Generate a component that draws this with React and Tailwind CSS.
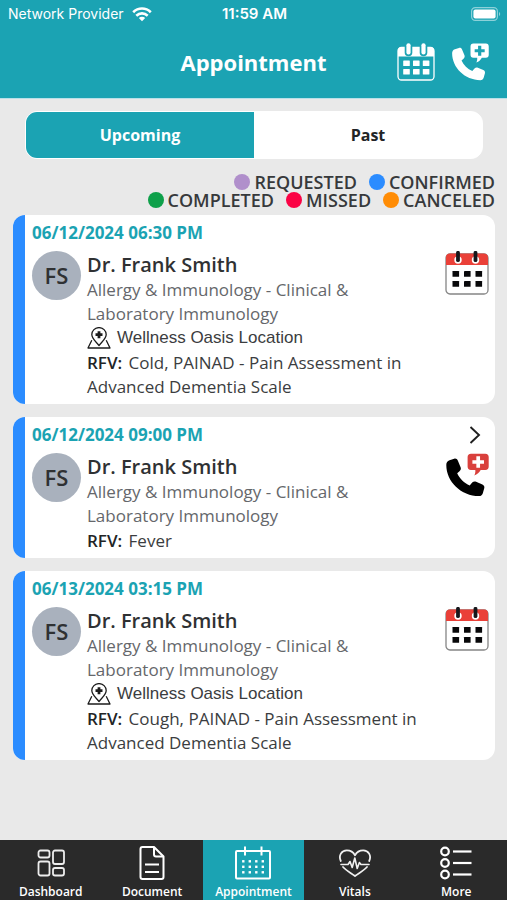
import React, { useState } from "react";

const LEGEND = [
  [
    { label: "REQUESTED", dot: "bg-[#b08fcb]" },
    { label: "CONFIRMED", dot: "bg-[#2b8cff]" },
  ],
  [
    { label: "COMPLETED", dot: "bg-[#0ea04a]" },
    { label: "MISSED", dot: "bg-[#fb0345]" },
    { label: "CANCELED", dot: "bg-[#ff8c05]" },
  ],
];

const APPOINTMENTS = [
  {
    id: 1,
    date: "06/12/2024 06:30 PM",
    location: "Wellness Oasis Location",
    reason: "Cold, PAINAD - Pain Assessment in Advanced Dementia Scale",
  },
  {
    id: 2,
    date: "06/12/2024 09:00 PM",
    reason: "Fever",
  },
  {
    id: 3,
    date: "06/13/2024 03:15 PM",
    location: "Wellness Oasis Location",
    reason: "Cough, PAINAD - Pain Assessment in Advanced Dementia Scale",
  },
];

const WifiIcon = () => (
  <svg width="20" height="15" viewBox="0 0 20 15" fill="none" stroke="white" strokeWidth="2.6">
    <path d="M1.2 5.2c5-4.9 12.6-4.9 17.6 0M4.3 8.7c3.3-3.1 8.1-3.1 11.4 0" />
    <path d="M10 14.2 6.8 11c1.8-1.6 4.6-1.6 6.4 0z" fill="white" stroke="none" />
  </svg>
);

const BatteryIcon = () => (
  <svg width="30" height="14" viewBox="0 0 30 14" fill="none">
    <rect x="0.6" y="0.6" width="25.8" height="12.8" rx="3.6" stroke="#8dd1d9" strokeWidth="1.2" />
    <rect x="2.4" y="2.4" width="22.2" height="9.2" rx="2" fill="white" />
    <path d="M28 5v4c1.6-.7 1.6-3.3 0-4z" fill="#8dd1d9" />
  </svg>
);

const HeaderCalendarIcon = () => (
  <svg width="38" height="38" viewBox="0 0 38 38" fill="none">
    <path d="M1 13.5V7.5Q1 4 4.5 4h29Q37 4 37 7.5v6z" fill="white" />
    <rect x="1" y="4.5" width="36" height="32.5" rx="3.5" stroke="white" strokeWidth="1.3" />
    {[11.5, 26.5].map((x) => (
      <g key={x}>
        <path d={`M${x} 3v6.5`} stroke="#1ba3b3" strokeWidth="7.6" strokeLinecap="round" />
        <path d={`M${x} 2.3v7.2`} stroke="white" strokeWidth="4.2" strokeLinecap="round" />
      </g>
    ))}
    {[6.2, 16, 25.8].map((x) =>
      [17.5, 26].map((y) => (
        <rect key={`${x}-${y}`} x={x} y={y} width="6.6" height="5.6" rx="0.6" fill="white" />
      )),
    )}
  </svg>
);

const CardCalendarIcon = () => (
  <svg width="44" height="44" viewBox="0 0 44 44" fill="none">
    <rect x="1" y="3" width="42" height="40" rx="4" fill="white" stroke="#858585" strokeWidth="1.3" />
    <path d="M1 14V6.5Q1 2.5 5 2.5h34Q43 2.5 43 6.5V14z" fill="#ea4038" />
    {[13, 30.5].map((x) => (
      <g key={x}>
        <circle cx={x} cy="9" r="3.7" fill="white" />
        <path d={`M${x} 1.8v7.4`} stroke="#16171b" strokeWidth="3.8" strokeLinecap="round" />
      </g>
    ))}
    {[7.5, 19, 30.5].map((x) =>
      [20, 30].map((y) => (
        <rect key={`${x}-${y}`} x={x} y={y} width="6.6" height="5.8" rx="0.4" fill="#08080a" />
      )),
    )}
  </svg>
);

// Handset with a medical cross in a speech bubble
const CallIcon = ({ size, phone, bubble, cross }) => (
  <svg width={size} height={size} viewBox="0 0 44 44" fill="none">
    <path
      d="M4.5 7.3 9.2 5.7C10.8 5.2 12.2 6 12.9 7.7L15.6 14.3C16.2 15.8 15.7 17.2 14.5 18.2L12.2 20.2C14.5 25.6 19.2 30 24.7 32.4L27.2 29.6C28.2 28.5 29.7 28.1 31.1 28.7L37.4 31.4C38.9 32.1 39.7 33.5 39.3 35L37.9 40C37.5 41.9 36 43.1 34 43.1 16.2 43.1 1.3 28.8 1.3 12 1.3 9.7 2.4 8 4.5 7.3Z"
      fill={phone}
    />
    <path
      d="M26 .7h14.3c2.3 0 3.4 1.3 3.4 3.4v9.5c0 2.1-1.1 3.4-3.4 3.4h-4.6c-1.4 2.7-3.5 4.4-6.4 5.5.8-1.7 1.3-3.5 1-5.5H26c-2.3 0-3.4-1.3-3.4-3.4V4.1c0-2.1 1.1-3.4 3.4-3.4z"
      fill={bubble}
    />
    <path d="M33.200 3.200v11.600M27.400 9H39" stroke={cross} strokeWidth="3.7" />
  </svg>
);

const ChevronIcon = () => (
  <svg width="12" height="18" viewBox="0 0 12 18" fill="none" stroke="#202020" strokeWidth="1.9">
    <path d="M1.5 1 10 9l-8.5 8" />
  </svg>
);

const LocationIcon = () => (
  <svg width="24" height="22" viewBox="0 0 24 22" fill="none" stroke="#1c1c1c" strokeWidth="1.3" strokeLinejoin="round">
    <path d="M4.8 13.2 1 21h22l-3.800-7.800" />
    <path d="M12 18.5C9 14.7 4.8 11.8 4.8 7.6a7.2 7 0 0 1 14.4 0c0 4.2-4.2 7.1-7.2 10.9z" fill="white" />
    <path d="M12 4.2v7M8.5 7.7h7" strokeWidth="2.8" />
  </svg>
);

const DashboardIcon = () => (
  <svg width="36" height="36" viewBox="0 0 36 36" fill="none" stroke="#ededed" strokeWidth="1.8">
    <rect x="5.5" y="5.5" width="11" height="7" rx="2" />
    <rect x="20" y="5.5" width="11" height="13.5" rx="2" />
    <rect x="5.5" y="16.5" width="11" height="14" rx="2" />
    <rect x="20" y="23" width="11" height="7.5" rx="2" />
  </svg>
);

const DocumentIcon = () => (
  <svg width="36" height="36" viewBox="0 0 36 36" fill="none" stroke="white" strokeWidth="2" strokeLinejoin="round">
    <path d="M8.5 2H20l9.5 9.5v20.5q0 2-2 2h-19q-2 0-2-2V4q0-2 2-2z" />
    <path d="M20 2v7.5q0 2 2 2h7.5M11 19.5h14M11 27h14" />
  </svg>
);

const AppointmentIcon = () => (
  <svg width="36" height="36" viewBox="0 0 36 36" fill="none" stroke="white" strokeWidth="2">
    <rect x="1" y="6" width="34" height="27.5" rx="1" />
    <path d="M10 1.5v9M26.5 1.5v9" />
    {[8.5, 15, 21.5, 28].map((x) =>
      [16.5, 22, 27.5].map((y) => (
        <rect key={`${x}-${y}`} x={x - 1.4} y={y - 1.4} width="2.4" height="2.4" fill="white" stroke="none" />
      )),
    )}
  </svg>
);

const VitalsIcon = () => (
  <svg width="36" height="36" viewBox="0 0 36 36" fill="none" stroke="#f0f0f0" strokeWidth="1.8" strokeLinecap="round" strokeLinejoin="round">
    <path d="M3.8 16C1.2 10.5 4.6 5.3 9.8 5.3c3.8 0 6.7 2 8.2 5 1.5-3 4.4-5 8.2-5 5.2 0 8.6 5.2 6 10.7" />
    <path d="M6 22c3.3 3.7 8 6 12 9 4-3 8.7-5.3 12-9" />
    <path d="M4 19.5h7l2-3 2.2 6 2.6-9.5 2.4 10.5 2.2-6 1.6 2h8" strokeWidth="1.6" />
  </svg>
);

const MoreIcon = () => (
  <svg width="36" height="36" viewBox="0 0 36 36" fill="none" stroke="white" strokeWidth="2.2">
    {[6.5, 18, 29.5].map((y) => (
      <g key={y}>
        <circle cx="7" cy={y} r="3.8" />
        <path d={`M15 ${y}h18.5`} />
      </g>
    ))}
  </svg>
);

const NAV_ITEMS = [
  { label: "Dashboard", Icon: DashboardIcon },
  { label: "Document", Icon: DocumentIcon },
  { label: "Appointment", Icon: AppointmentIcon },
  { label: "Vitals", Icon: VitalsIcon },
  { label: "More", Icon: MoreIcon },
];

const AppointmentCard = ({ item }) => (
  <article className="flex bg-white rounded-xl overflow-hidden">
    <div className="w-3 bg-[#2b8cff] shrink-0" />
    <div className="flex-1 min-w-0 pl-[7px] pr-1.5 pt-2 pb-[5px]">
      <div className="flex items-center justify-between h-5">
        <time className="text-[17px] leading-5 font-bold text-[#1ba3b3]">{item.date}</time>
        {!item.location && (
          <button aria-label="Open appointment" className="mr-2">
            <ChevronIcon />
          </button>
        )}
      </div>
      <div className="flex mt-2">
        <div className="w-[49px] h-[49px] rounded-full bg-[#a9b1bd] text-[#2f3133] text-[22px] font-semibold flex items-center justify-center shrink-0">
          FS
        </div>
        <div className="flex-1 min-w-0 ml-1.5 pt-0.5">
          <h2 className="text-xl leading-6 font-semibold text-[#2f3133]">Dr. Frank Smith</h2>
          <p className="mt-px text-[17px] leading-6 text-[#65676b]">
            Allergy &amp; Immunology - Clinical &amp; Laboratory Immunology
          </p>
          {item.location && (
            <p className="flex items-center gap-1.5 text-[17px] leading-6 text-[#3b3d40] font-['Liberation_Sans',sans-serif]">
              <LocationIcon />
              {item.location}
            </p>
          )}
          <p className="mt-px text-[17px] leading-6 text-[#3b3d40]">
            <span className="mr-0.5 font-semibold text-[#222426]">RFV:</span> {item.reason}
          </p>
        </div>
        <button
          aria-label={item.location ? "Office visit" : "Call visit"}
          className="self-start shrink-0 ml-2"
        >
          {item.location ? (
            <CardCalendarIcon />
          ) : (
            <CallIcon size={44} phone="#000000" bubble="#d9403c" cross="#ffffff" />
          )}
        </button>
      </div>
    </div>
  </article>
);

const App = () => {
  const [tab, setTab] = useState("Upcoming");

  return (
    <div className="min-h-screen flex flex-col bg-[#e9e9e9] font-['Open_Sans',sans-serif]">
      {/* Header */}
      <header className="bg-[#1ba3b3] text-white border-b border-[#b9e0e8]">
        <div className="grid grid-cols-3 items-center h-7 pl-2 pr-1.5 text-sm font-['Inter',sans-serif]">
          <div className="flex items-center gap-2 whitespace-nowrap">
            Network Provider
            <WifiIcon />
          </div>
          <span className="text-center text-[15px] font-semibold">11:59 AM</span>
          <div className="flex justify-end">
            <BatteryIcon />
          </div>
        </div>
        <div className="grid grid-cols-[1fr_auto_1fr] items-center h-[70px] px-[18px] pb-0.5">
          <h1 className="col-start-2 text-[22px] font-bold">Appointment</h1>
          <div className="flex items-center justify-end gap-4">
            <button aria-label="Book appointment">
              <HeaderCalendarIcon />
            </button>
            <button aria-label="Request a call">
              <CallIcon size={38} phone="#ffffff" bubble="#ffffff" cross="#1ba3b3" />
            </button>
          </div>
        </div>
      </header>

      <main className="flex-1 pt-3 pb-6 pl-[13px] pr-3">
        {/* Tabs */}
        <div role="tablist" className="flex h-12 mx-3 rounded-xl overflow-hidden bg-white border border-white">
          {["Upcoming", "Past"].map((t) => (
            <button
              key={t}
              role="tab"
              aria-selected={tab === t}
              onClick={() => setTab(t)}
              className={`flex-1 text-base font-bold ${
                tab === t ? "bg-[#1ba3b3] text-white" : "bg-white text-[#222426]"
              }`}
            >
              {t}
            </button>
          ))}
        </div>

        {/* Status legend */}
        <div className="mt-3.5 flex flex-col items-end">
          {LEGEND.map((row, i) => (
            <ul key={i} className="flex gap-3 text-lg leading-[18px] font-semibold text-[#37393b]">
              {row.map(({ label, dot }) => (
                <li key={label} className="flex items-center gap-1">
                  <span className={`w-4 h-4 rounded-full ${dot}`} />
                  {label}
                </li>
              ))}
            </ul>
          ))}
        </div>

        <div className="mt-1.5 flex flex-col gap-[13px]">
          {APPOINTMENTS.map((item) => (
            <AppointmentCard key={item.id} item={item} />
          ))}
        </div>
      </main>

      {/* Bottom navigation */}
      <nav className="sticky bottom-0 grid grid-cols-5 h-[60px] bg-[#2a2a2a] text-white">
        {NAV_ITEMS.map(({ label, Icon }) => (
          <a
            key={label}
            href={`#${label.toLowerCase()}`}
            className={`flex flex-col items-center gap-[3px] pt-[5px] text-xs leading-4 font-semibold ${
              label === "Appointment" ? "bg-[#1ba3b3]" : ""
            }`}
          >
            <Icon />
            {label}
          </a>
        ))}
      </nav>
    </div>
  );
};

export default App;
